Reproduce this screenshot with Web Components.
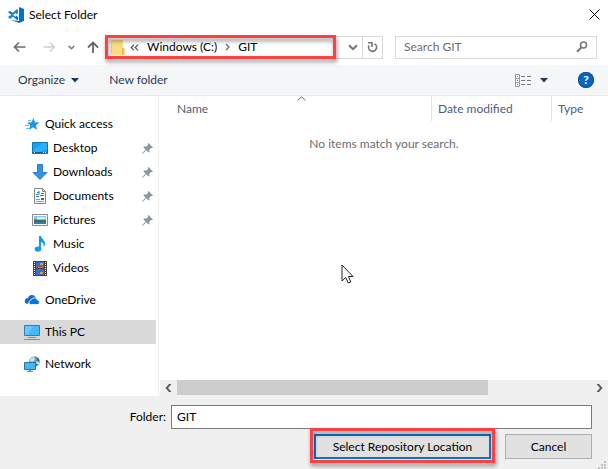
<!DOCTYPE html>
<html lang="en">
<head>
<meta charset="utf-8">
<title>Select Folder</title>
<style>
  body {
    margin: 0;
    font: 12px/16px Lato, "Open Sans", sans-serif;
    color: #000;
    background: #fff;
  }
</style>
</head>
<body>
<folder-dialog></folder-dialog>

<script>
const base = `
  *, :host { box-sizing: border-box; }
  button, input { font: inherit; color: inherit; margin: 0; padding: 0; }
  button { border: 0; background: none; display: flex; align-items: center; justify-content: center; white-space: nowrap; }
  app-icon { flex: none; }
`;

// [width, height, markup]
const icons = {
  code: [16, 16, `
    <path fill="#0072c6" d="M11 0 16 2V14L11 16 3 13 11 14Z"/>
    <path fill="#0072c6" d="M0 5 2 4 10 10V13L9 13Z"/>
    <path fill="#1a85d6" d="M0 10 9 2 10 3V6L2 12Z"/>
    <path fill="#fff" d="M2 7 3 8 2 9Z M8 6 5 8 8 10Z"/>`],
  close: [11, 11, `<path d="M.5.5 10.500 10.500M10.500.5.5 10.500" stroke="#000" fill="none"/>`],
  back: [13, 12, `<path d="M12.500 6H1.500M6 1.500 1.500 6 6 10.500" stroke="#6b6b6b" stroke-width="1.600" fill="none"/>`],
  forward: [13, 12, `<path d="M.5 6H11.500M7 1.500 11.500 6 7 10.500" stroke="#cfcfcf" stroke-width="1.300" fill="none"/>`],
  recent: [7, 5, `<path d="M.7 1 3.500 3.800 6.300 1" stroke="#777" stroke-width="1.500" fill="none"/>`],
  up: [12, 12, `<path d="M6 12V1.500M1 6.500 6 1.500 11 6.500" stroke="#666" stroke-width="1.800" fill="none"/>`],
  folder: [14, 17, `
    <path fill="#ffe08a" d="M1 1h11v15H1z"/>
    <path fill="#f7d16f" d="M0 2h1v13H0zM11 9h2v7h-2z"/>
    <path fill="#fbdc84" d="M2 1h9v14H2z"/>
    <path d="M11.500 16V10l1-1 .5 1v6" stroke="#e6b94e" fill="none"/>`],
  more: [9, 7, `<path d="M4 .7 1.200 3.500 4 6.300M8 .7 5.200 3.500 8 6.300" stroke="#555" stroke-width="1.200" fill="none"/>`],
  crumb: [5, 8, `<path d="M1 1 4 4 1 7" stroke="#777" stroke-width="1.500" fill="none"/>`],
  drop: [10, 7, `<path d="M1 1.200 5 5.200 9 1.200" stroke="#737373" stroke-width="2" fill="none"/>`],
  refresh: [11, 12, `
    <path d="M7.500 2.800A4 4 0 1 1 2 4.500" stroke="#777" stroke-width="1.700" fill="none"/>
    <path d="M1 1.800H5V6" stroke="#777" stroke-width="1.600" fill="none"/>`],
  search: [12, 12, `<circle cx="7.500" cy="4" r="3" stroke="#777" stroke-width="1.600" fill="none"/><path d="M5.300 6.500 1 10.800" stroke="#777" stroke-width="2"/>`],
  caret: [8, 5, `<path fill="#1e395b" d="M0 0h8L4 4.500z"/>`],
  view: [17, 13, `
    <path fill="#fff" stroke="#999" d="M.5.5h4v12h-4zM.5 4.500h4M.5 8.500h4"/>
    <path fill="#777" d="M2 2h1v1H2zM2 6h1v1H2zM6 2h4v1H6zM12 2h4v1h-4zM6 6h4v1H6zM12 6h4v1h-4zM6 10h4v1H6zM12 10h4v1h-4z"/>
    <path fill="#d33" d="M2 10h1v1H2z"/>`],
  sort: [9, 5, `<path d="M.7 4.500 4.500.7 8.300 4.500" stroke="#666" fill="none"/>`],
  quick: [16, 16, `
    <path fill="#2196e3" d="M9.500 2 11 6.200 15.500 6.500 12 9.200 13 14 9 11.300 5 14 6.200 9.300 3 6.500 7.500 6.200Z"/>
    <path d="M4 4.500h3M1 9.500h4M2 12.500h3" stroke="#68bbed"/>`],
  desktop: [16, 12, `
    <path fill="#16a2fb" stroke="#1273ae" d="M.5.5h15v11H.5z"/>
    <path fill="#46b8ff" d="M1 8 11 1h4v6L8 10H1z" opacity=".5"/>
    <path fill="#0e5b8e" d="M1 10h14v1H1z"/><path fill="#fff" d="M2 10h1v1H2zM11 10h1v1h-1zM13 10h1v1h-1z"/>`],
  downloads: [16, 16, `<path fill="#3590e2" stroke="#2d7ec9" d="M5.500.5h5v8h4.500L8 15.500 1 8.500H5.500z"/>`],
  documents: [12, 16, `
    <path fill="#fff" stroke="#858585" d="M.5.5h8l3 3v12H.5z"/>
    <path stroke="#858585" fill="none" d="M8.500.5v3h3"/>
    <path stroke="#2680bd" d="M2 6.500h2M3 4.500h2M5 3v4M7 5.500h3M6 7.500h4M2 8.500h3"/>
    <path stroke="#999" d="M2 11.500h4M2 13.500h8"/><path fill="#3a6f98" d="M7 10h3v2H7z"/>`],
  pictures: [16, 12, `
    <path fill="#fff" stroke="#8f8f8f" d="M.5.5h15v11H.5z"/>
    <path fill="#86c4ea" d="M2 2h12v4H2z"/><path fill="#d9eefa" d="M5 3h7l2 2H5z"/>
    <path fill="#3f6e58" d="M2 5 6 6h8v2H2z"/><path fill="#377fa8" d="M2 8h12v2H2z"/>`],
  music: [12, 16, `
    <path fill="#0f9af0" d="M5 0H7C7.500 3 11 4 11 7.500 11 9 10.500 10 9.500 11 10 8 9 6.500 7 6V13H5z"/>
    <ellipse cx="4" cy="13" rx="3.300" ry="2.600" fill="#0f9af0"/>`],
  videos: [14, 15, `
    <path fill="#444" d="M0 0h14v15H0z"/>
    <path fill="#3d6fc4" d="M3 1h8v6H3zM3 8h8v6H3z"/>
    <path fill="#e0a22c" d="M7 2h3v2H7zM7 11h3v2H7z"/><path fill="#c4484e" d="M4 5h3v2H4zM8 5h2v1H8z"/><path fill="#58a456" d="M5 6h5v1H5z"/>
    <path stroke="#fff" stroke-dasharray="1 1" d="M1.500 1v13M12.500 1v13"/>`],
  onedrive: [16, 10, `
    <path fill="#0a6ccb" d="M3 9A3 3 0 0 1 1 5 3 3 0 0 1 4 3 4 4 0 0 1 11 1.500L12 3Z"/>
    <path fill="#0078d7" stroke="#fff" stroke-width=".8" d="M6.500 9.600A2.500 2.500 0 0 1 5 7 2.500 2.500 0 0 1 7 5 3.500 3.500 0 0 1 13.500 5 2.400 2.400 0 0 1 14 9.600Z"/>`],
  pc: [16, 15, `
    <path fill="#43b8fa" stroke="#397ca8" d="M.5.500h15v10H.5z"/><path fill="#7fd0ff" d="M1 1h9L3 10H1z" opacity=".6"/>
    <path fill="#6a90ad" d="M4 12h8v1H4zM0 14h16v1H0z"/>`],
  network: [16, 16, `
    <circle cx="10.500" cy="5.500" r="5.300" fill="#6e9fb8"/><path fill="#c6e2ee" d="M7 2 10 1 11 4 8 6 6 5zM12 6l3-1v3l-2 1z"/><path fill="#39708f" d="M12 1 15 3 15.500 6 13 5zM11 8h3l-2 2z"/>
    <path fill="#45b7f6" stroke="#28749f" d="M.5 6.500h11v7H.5z"/><path fill="#6a90ad" d="M5 14h2v1H5zM3 15h6v1H3z"/>`],
  pin: [11, 11, `<path fill="#8b99a5" d="M6.500 0 11 4.500 9.800 5.300 9 5 7.500 6.600 7.400 9 6.500 9.500 4.300 7.300 1 10.500 0 11 .4 10 3.600 6.600 1.400 4.500 2 3.600 4.500 3.600 6 2 5.700 1z"/>`],
  left: [7, 8, `<path fill="#555" d="M4 0h2.500L3 4 6.500 8H4L.5 4z"/>`],
  right: [7, 8, `<path fill="#555" d="M3 0H.5L4 4 .5 8H3L6.500 4z"/>`],
  cursor: [13, 20, `<path fill="#fff" stroke="#222" d="M1 1V17L4.800 13.500 7.200 19 9.800 18 7.500 12.500H12Z"/>`],
  grip: [8, 8, `<path fill="#bfbfbf" d="M6 0h2v2H6zM3 3h2v2H3zM6 3h2v2H6zM0 6h2v2H0zM3 6h2v2H3zM6 6h2v2H6z"/>`],
};

class AppIcon extends HTMLElement {
  connectedCallback() {
    const [w, h, body] = icons[this.getAttribute("name")];
    this.attachShadow({ mode: "open" }).innerHTML = `
      <style>
        :host { display: block; }
        svg { display: block; }
      </style>
      <svg width="${w}" height="${h}" viewBox="0 0 ${w} ${h}" aria-hidden="true">${body}</svg>
    `;
  }
}

// Red frame drawn over the slotted content
class CallOut extends HTMLElement {
  connectedCallback() {
    this.attachShadow({ mode: "open" }).innerHTML = `
      <style>
        :host { display: block; position: relative; --inset: 0; }
        :host::after {
          content: "";
          position: absolute;
          inset: var(--inset);
          border: 3px solid #fb4141;
          filter: drop-shadow(1px 3px 2px rgba(0, 0, 0, .45));
          pointer-events: none;
        }
      </style>
      <slot></slot>
    `;
  }
}

class TitleBar extends HTMLElement {
  connectedCallback() {
    this.attachShadow({ mode: "open" }).innerHTML = `
      <style>
        ${base}
        :host { display: flex; align-items: center; gap: 5px; height: 29px; padding: 0 8px; }
        h1 { flex: 1; margin: 0; font: inherit; }
        button { width: 12px; height: 16px; }
      </style>
      <app-icon name="code"></app-icon>
      <h1><slot></slot></h1>
      <button aria-label="Close"><app-icon name="close"></app-icon></button>
    `;
  }
}

class AddressBar extends HTMLElement {
  connectedCallback() {
    this.attachShadow({ mode: "open" }).innerHTML = `
      <style>
        ${base}
        :host { display: flex; align-items: center; height: 36px; padding: 0 11px 0 13px; }
        nav { display: flex; align-items: center; }
        .history { gap: 12px; width: 92px; }
        .history button:first-child { margin-right: 5px; }
        .address { flex: 1; display: flex; height: 23px; border: 1px solid #d9d9d9; margin-right: 12px; }
        call-out { flex: 1; --inset: -2px 0 -1px -1px; }
        .crumbs { height: 100%; gap: 8px; padding-left: 5px; }
        .crumbs app-icon:first-child { margin-right: -3px; }
        .tool { width: 20px; }
        .address > .tool:first-of-type { width: 26px; padding-left: 8px; }
        .tool + .tool { border-left: 1px solid #d9d9d9; }
        .search { display: flex; align-items: center; width: 202px; height: 23px; border: 1px solid #d9d9d9; padding: 0 8px; }
        input { flex: 1; min-width: 0; border: 0; outline: 0; background: none; }
        input::placeholder { color: #6d6d6d; opacity: 1; }
      </style>
      <nav class="history" aria-label="History">
        <button aria-label="Back"><app-icon name="back"></app-icon></button>
        <button aria-label="Forward"><app-icon name="forward"></app-icon></button>
        <button aria-label="Recent locations"><app-icon name="recent"></app-icon></button>
        <button aria-label="Up"><app-icon name="up"></app-icon></button>
      </nav>
      <div class="address">
        <call-out>
          <nav class="crumbs" aria-label="Address">
            <app-icon name="folder"></app-icon>
            <app-icon name="more"></app-icon>
            <button>Windows (C:)</button>
            <app-icon name="crumb"></app-icon>
            <button>GIT</button>
          </nav>
        </call-out>
        <button class="tool" aria-label="Previous locations"><app-icon name="drop"></app-icon></button>
        <button class="tool" aria-label="Refresh"><app-icon name="refresh"></app-icon></button>
      </div>
      <label class="search">
        <input type="search" placeholder="Search GIT" aria-label="Search GIT">
        <app-icon name="search"></app-icon>
      </label>
    `;
  }
}

class CommandBar extends HTMLElement {
  connectedCallback() {
    this.attachShadow({ mode: "open" }).innerHTML = `
      <style>
        ${base}
        :host {
          display: flex; align-items: center; height: 31px; padding: 0 14px 0 18px;
          color: #1e395b; background: #f5f6f7; border-bottom: 1px solid #e6e8ea;
        }
        button { gap: 6px; }
        .new { margin: 0 auto 0 30px; }
        .view { gap: 8px; margin-right: 30px; }
        .help {
          width: 16px; height: 16px; border-radius: 50%;
          background: #0067c5; color: #fff; font-weight: bold;
          box-shadow: 0 0 0 1px #1c4f80 inset;
        }
      </style>
      <button>Organize <app-icon name="caret"></app-icon></button>
      <button class="new">New folder</button>
      <button class="view" aria-label="Change your view"><app-icon name="view"></app-icon><app-icon name="caret"></app-icon></button>
      <button class="help" aria-label="Help">?</button>
    `;
  }
}

class PlaceItem extends HTMLElement {
  connectedCallback() {
    this.attachShadow({ mode: "open" }).innerHTML = `
      <style>
        ${base}
        :host { display: block; }
        :host([top]) { margin-top: 8px; }
        a {
          display: flex; align-items: center; gap: 5px; height: 24px;
          padding: 0 3px 0 32px; color: inherit; text-decoration: none;
        }
        :host([top]) a { padding-left: 24px; }
        :host([selected]) a { background: #d9d9d9; }
        .icon { display: flex; justify-content: center; width: 16px; }
        span { flex: 1; }
      </style>
      <a href="#">
        <div class="icon"><app-icon name="${this.getAttribute("icon")}"></app-icon></div>
        <span><slot></slot></span>
        ${this.hasAttribute("pinned") ? '<app-icon name="pin"></app-icon>' : ""}
      </a>
    `;
  }
}

class PlacesPane extends HTMLElement {
  connectedCallback() {
    this.attachShadow({ mode: "open" }).innerHTML = `
      <style>
        ${base}
        :host { display: block; flex: none; width: 159px; margin-right: 1px; padding: 8px 2px 0 0; border-right: 1px solid #f0f0f0; }
      </style>
      <nav aria-label="Places">
        <place-item top icon="quick">Quick access</place-item>
        <place-item icon="desktop" pinned>Desktop</place-item>
        <place-item icon="downloads" pinned>Downloads</place-item>
        <place-item icon="documents" pinned>Documents</place-item>
        <place-item icon="pictures" pinned>Pictures</place-item>
        <place-item icon="music">Music</place-item>
        <place-item icon="videos">Videos</place-item>
        <place-item top icon="onedrive">OneDrive</place-item>
        <place-item top icon="pc" selected>This PC</place-item>
        <place-item top icon="network">Network</place-item>
      </nav>
    `;
  }
}

class ScrollStrip extends HTMLElement {
  connectedCallback() {
    this.attachShadow({ mode: "open" }).innerHTML = `
      <style>
        ${base}
        :host { display: flex; height: 16px; padding-bottom: 1px; background: #f0f0f0; }
        button { width: 17px; }
        .track { flex: 1; }
        .thumb { width: 75%; height: 100%; background: #cdcdcd; }
      </style>
      <button aria-label="Scroll left"><app-icon name="left"></app-icon></button>
      <div class="track"><div class="thumb"></div></div>
      <button aria-label="Scroll right"><app-icon name="right"></app-icon></button>
    `;
  }
}

class FileList extends HTMLElement {
  connectedCallback() {
    this.attachShadow({ mode: "open" }).innerHTML = `
      <style>
        ${base}
        :host { display: flex; flex-direction: column; flex: 1; min-width: 0; position: relative; }
        table { width: 100%; table-layout: fixed; border-collapse: separate; border-spacing: 0; padding-left: 11px; }
        th {
          height: 25px; padding: 0 6px; text-align: left; font-weight: normal;
          color: #4c607a; border-right: 1px solid #e5e5e5; position: relative;
        }
        th:nth-child(2) { width: 120px; }
        th:last-child { width: 56px; border-right: 0; }
        .sort { position: absolute; top: 0; left: 0; right: 0; display: flex; justify-content: center; }
        td { padding: 15px 11px 0 0; text-align: center; color: #6d6d6d; }
        .cursor { position: absolute; left: 181px; top: 168px; }
        scroll-strip { margin-top: auto; }
      </style>
      <table>
        <thead>
          <tr>
            <th aria-sort="ascending">Name<div class="sort"><app-icon name="sort"></app-icon></div></th>
            <th>Date modified</th>
            <th>Type</th>
          </tr>
        </thead>
        <tbody>
          <tr><td colspan="3">No items match your search.</td></tr>
        </tbody>
      </table>
      <app-icon class="cursor" name="cursor"></app-icon>
      <scroll-strip></scroll-strip>
    `;
  }
}

class DialogFooter extends HTMLElement {
  connectedCallback() {
    this.attachShadow({ mode: "open" }).innerHTML = `
      <style>
        ${base}
        :host { display: block; position: relative; background: #f0f0f0; padding: 9px 16px 10px; }
        .row { display: flex; align-items: center; justify-content: flex-end; }
        label { width: 150px; text-align: right; }
        input { flex: 1; min-width: 0; height: 24px; margin-left: 5px; padding: 0 5px 2px; border: 1px solid #7a7a7a; background: #fff; }
        .actions { gap: 14px; padding-top: 5px; }
        .actions button { height: 25px; background: #e1e1e1; border: 1px solid #adadad; }
        call-out { --inset: -6px -4px -4px; }
        .actions .primary { width: 177px; border: 2px solid #0078d7; }
        .cancel { width: 87px; }
        .grip { position: absolute; right: 2px; bottom: 0; }
      </style>
      <div class="row">
        <label for="folder">Folder:</label>
        <input id="folder" type="text" value="GIT">
      </div>
      <div class="row actions">
        <call-out><button class="primary">Select Repository Location</button></call-out>
        <button class="cancel">Cancel</button>
      </div>
      <app-icon class="grip" name="grip"></app-icon>
    `;
  }
}

class FolderDialog extends HTMLElement {
  connectedCallback() {
    this.attachShadow({ mode: "open" }).innerHTML = `
      <style>
        :host { display: flex; flex-direction: column; min-height: 100vh; }
        main { display: flex; flex: 1; }
      </style>
      <title-bar>Select Folder</title-bar>
      <address-bar></address-bar>
      <command-bar></command-bar>
      <main>
        <places-pane></places-pane>
        <file-list></file-list>
      </main>
      <dialog-footer></dialog-footer>
    `;
  }
}

customElements.define("app-icon", AppIcon);
customElements.define("call-out", CallOut);
customElements.define("title-bar", TitleBar);
customElements.define("address-bar", AddressBar);
customElements.define("command-bar", CommandBar);
customElements.define("place-item", PlaceItem);
customElements.define("places-pane", PlacesPane);
customElements.define("scroll-strip", ScrollStrip);
customElements.define("file-list", FileList);
customElements.define("dialog-footer", DialogFooter);
customElements.define("folder-dialog", FolderDialog);
</script>
</body>
</html>
